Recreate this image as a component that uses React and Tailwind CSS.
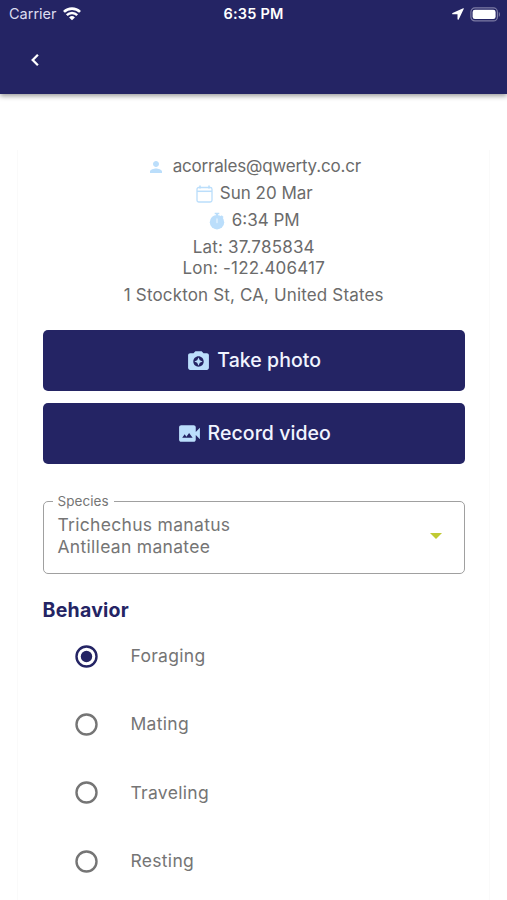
import React, { useState } from 'react';
import { MdPerson, MdCameraEnhance, MdVideoCameraBack } from 'react-icons/md';

const behaviors = ['Foraging', 'Mating', 'Traveling', 'Resting'];

const CalendarIcon = () => (
  <svg className="w-[17px] h-[18px] text-[#bbdefb]" viewBox="0 0 17 18" fill="none" stroke="currentColor" strokeWidth="1.3">
    <rect x="1" y="2.5" width="15" height="14.5" rx="1.8" />
    <path d="M1 6.3h15" strokeWidth="1.5" />
    <path d="M4 .5v3M13 .5v3" strokeWidth="1.6" />
  </svg>
);

const StopwatchIcon = () => (
  <svg className="w-[16px] h-[18px] text-[#bbdefb]" viewBox="0 0 16 18" fill="currentColor">
    <circle cx="8" cy="10.2" r="7.2" />
    <path d="M5.7.8h4.6v1.5H9v2H7v-2H5.700z" />
    <path d="m12.700 3.300 1.900 1.800-1.500 1.500-1.900-1.800z" />
    <path d="M8 7v3.500" stroke="#e6f3fe" strokeWidth="1.300" strokeLinecap="round" />
  </svg>
);

const StatusBar = () => (
  <div className="grid grid-cols-3 items-center h-7 pl-[9px] pr-[6px] text-white">
    <div className="flex items-center gap-[6px]">
      <span className="text-[14.5px] text-[#dcdcf0]">Carrier</span>
      <svg className="w-[18px] h-[14px]" viewBox="0 0 19 14" fill="none" stroke="currentColor">
        <path d="M1 4.8a12.2 12.2 0 0 1 17 0" strokeWidth="2.8" />
        <path d="M4 8.2a7.8 7.8 0 0 1 11 0" strokeWidth="2.6" />
        <path d="M9.5 13.6 6.4 10.7a4.5 4.5 0 0 1 6.200 0z" fill="currentColor" stroke="none" />
      </svg>
    </div>
    <span className="-ml-[3px] text-center text-[14.5px] font-semibold tracking-[0.2px]">6:35 PM</span>
    <div className="flex items-center justify-end gap-[6px]">
      <svg className="w-[12px] h-[12px]" viewBox="0 0 12 12" fill="currentColor">
        <path d="M11.2.3.6 5c-.7.3-.5 1.300.2 1.300h4.700v4.700c0 .9.900 1 1.300.2L11.700.900c.2-.4-.1-.8-.5-.6z" />
      </svg>
      <svg className="w-[31px] h-[15px]" viewBox="0 0 31 15">
        <rect x="0.9" y="0.9" width="26.5" height="13" rx="4" fill="none" stroke="#7c7ba4" strokeWidth="1.2" />
        <rect x="2.6" y="2.7" width="23" height="9.4" rx="2.3" fill="white" />
        <path d="M28.8 5v4.800c1.500-.6 1.500-4.200 0-4.800z" fill="#7c7ba4" />
      </svg>
    </div>
  </div>
);

const MediaButton = ({ icon: Icon, label }) => (
  <button className="flex items-center justify-center gap-[6px] h-[61px] w-full rounded-[5px] bg-[#242464]">
    <Icon className="w-[25px] h-[25px] text-[#bbdefb]" />
    <span className="text-[19.5px] font-medium tracking-[0.05px] text-[#f1f4ff]">{label}</span>
  </button>
);

const Radio = ({ label, checked, onSelect }) => (
  <button onClick={onSelect} className="flex items-center h-[68.4px] w-full pl-[32px] text-left">
    <svg className={checked ? 'w-[23px] h-[23px] text-[#242464]' : 'w-[23px] h-[23px] text-[#757575]'} viewBox="0 0 23 23">
      <circle cx="11.5" cy="11.5" r="10" fill="none" stroke="currentColor" strokeWidth="2.4" />
      {checked && <circle cx="11.5" cy="11.5" r="5.700" fill="currentColor" />}
    </svg>
    <span className="ml-[33px] text-[17.5px] tracking-[0.3px] text-[#757575]">{label}</span>
  </button>
);

const App = () => {
  const [behavior, setBehavior] = useState('Foraging');

  return (
    <div className="flex flex-col h-[900px] w-full overflow-hidden bg-white font-['Inter',sans-serif]">
      <header className="h-[94px] shrink-0 bg-[#242464] shadow-[0_2px_5px_rgba(0,0,0,0.4)]">
        <StatusBar />
        <button className="flex ml-[23px] mt-[20px] text-white">
          <svg className="w-6 h-6" viewBox="0 0 24 24" fill="none" stroke="currentColor" strokeWidth="2.3">
            <path d="M14.900 6.800 9.700 12l5.200 5.200" />
          </svg>
        </button>
      </header>

      <main className="flex-1 mt-[56px] mx-[17px] pl-[24.5px] pr-[24px] border-x border-[#fafafa]">
        <div className="flex flex-col items-center pt-[3px] text-[17px] text-[#6b6b6b]">
          <div className="flex items-center h-[27px] gap-[8px]">
            <MdPerson className="w-[18px] h-[18px] text-[#bbdefb]" />
            <span className="tracking-[-0.2px]">acorrales@qwerty.co.cr</span>
          </div>
          <div className="flex items-center h-[27px] gap-[7px] pl-[1px]">
            <CalendarIcon />
            <span>Sun 20 Mar</span>
          </div>
          <div className="flex items-center h-[27px] gap-[7px] pl-[1px]">
            <StopwatchIcon />
            <span>6:34 PM</span>
          </div>
          <div className="mt-[3px] text-center leading-[21px] tracking-[0.2px]">
            <p>Lat: 37.785834</p>
            <p>Lon: -122.406417</p>
          </div>
          <p className="mt-[3px] leading-[27px] tracking-[0.15px]">1 Stockton St, CA, United States</p>
        </div>

        <div className="flex flex-col gap-[12px] mt-[21px]">
          <MediaButton icon={MdCameraEnhance} label="Take photo" />
          <MediaButton icon={MdVideoCameraBack} label="Record video" />
        </div>

        <fieldset className="h-[82px] mt-[28px] pl-[9px] rounded-[5px] border-[1.5px] border-[#a0a0a0]">
          <legend className="px-[5px] text-[13.5px] leading-[18px] tracking-[0.05px] text-[#757575]">Species</legend>
          <div className="flex items-center justify-between pl-[5px] pr-[22px] text-[17.5px] leading-[22px] tracking-[0.3px] text-[#757575]">
            <div className="mt-[4px]">
              <p>Trichechus manatus</p>
              <p>Antillean manatee</p>
            </div>
            <svg className="w-[12px] h-[6px] mt-[4px]" viewBox="0 0 12 6" fill="#c0ca33">
              <path d="M0 0h12L6 6z" />
            </svg>
          </div>
        </fieldset>

        <h2 className="mt-[23px] text-[19.5px] leading-[26px] font-bold tracking-[0.25px] text-[#242464]">Behavior</h2>
        <div className="-mt-[1px]">
          {behaviors.map((name) => (
            <Radio key={name} label={name} checked={behavior === name} onSelect={() => setBehavior(name)} />
          ))}
        </div>
      </main>
    </div>
  );
};

export default App;
